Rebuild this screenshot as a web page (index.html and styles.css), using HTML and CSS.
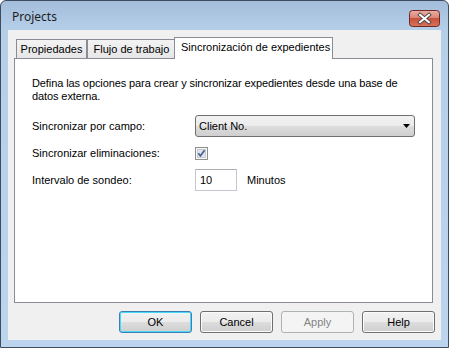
FILE: index.html
```html
<!DOCTYPE html>
<html lang="es">
<head>
<meta charset="utf-8">
<title>Projects</title>
<link rel="stylesheet" href="styles.css">
</head>
<body>
<div class="window">
  <div class="titlebar">
    <span class="title">Projects</span>
    <svg class="close" viewBox="0 0 31 17" width="31" height="17" aria-label="Cerrar">
      <defs>
        <linearGradient id="cg" x1="0" y1="0" x2="0" y2="1">
          <stop offset="0" stop-color="#eab0a6"/>
          <stop offset="0.45" stop-color="#db8576"/>
          <stop offset="0.5" stop-color="#c9503e"/>
          <stop offset="1" stop-color="#d9745a"/>
        </linearGradient>
      </defs>
      <rect x="0.5" y="0.5" width="30" height="16" rx="3" fill="url(#cg)" stroke="#6e2b25"/>
      <path d="M11 4.8 L20 12.2 M20 4.8 L11 12.2" stroke="#474747" stroke-width="3.8" stroke-linecap="square"/>
      <path d="M11 4.8 L20 12.2 M20 4.8 L11 12.2" stroke="#ffffff" stroke-width="2" stroke-linecap="square"/>
    </svg>
  </div>
  <div class="client">
    <div class="tabs">
      <div class="tab tab-props">Propiedades</div>
      <div class="tab tab-flow">Flujo de trabajo</div>
      <div class="tab tab-active">Sincronización de expedientes</div>
    </div>
    <div class="panel">
      <p class="desc">Defina las opciones para crear y sincronizar expedientes desde una base de<br>datos externa.</p>
      <div class="form">
        <div class="row">
          <span class="label">Sincronizar por campo:</span>
          <div class="combo">
            <span class="combo-text">Client No.</span>
            <svg class="arrow" width="7" height="4" viewBox="0 0 7 4"><path d="M0 0 H7 L3.5 4 Z" fill="#000"/></svg>
          </div>
        </div>
        <div class="row">
          <span class="label">Sincronizar eliminaciones:</span>
          <svg class="check" width="13" height="13" viewBox="0 0 13 13">
            <rect x="0.5" y="0.5" width="12" height="12" fill="#f6f6f6" stroke="#8f8f8f"/>
            <rect x="2.5" y="2.5" width="8" height="8" fill="#dfe3ea" stroke="#c8ccd4"/>
            <path d="M3.3 6.3 L5.4 8.8 L9.6 3.2" fill="none" stroke="#4a6392" stroke-width="1.7"/>
          </svg>
        </div>
        <div class="row">
          <span class="label">Intervalo de sondeo:</span>
          <div class="textbox">10</div>
          <span class="unit">Minutos</span>
        </div>
      </div>
    </div>
    <div class="buttons">
      <div class="btn btn-default">OK</div>
      <div class="btn">Cancel</div>
      <div class="btn btn-disabled">Apply</div>
      <div class="btn">Help</div>
    </div>
  </div>
</div>
</body>
</html>
```
FILE: styles.css
```css
* { box-sizing: border-box; }
html, body { margin: 0; padding: 0; }
body {
  width: 449px;
  height: 348px;
  overflow: hidden;
  background: #ffffff;
  font-family: "Liberation Sans", Arial, sans-serif;
  font-size: 11px;
  color: #000;
}
.window {
  width: 449px;
  height: 348px;
  border: 1px solid #3d4c5e;
  border-radius: 6px 6px 0 0;
  background: linear-gradient(#a3bddb 0px, #b6cfe9 30px, #bcd4ed 100%);
  display: flex;
  flex-direction: column;
}
.titlebar {
  height: 29px;
  display: flex;
  justify-content: space-between;
  align-items: flex-start;
  padding: 0 8px 0 11px;
}
.title {
  font-family: "Noto Sans", "Open Sans", sans-serif;
  font-size: 12px;
  line-height: 16px;
  margin-top: 8px;
  color: #1e1e1e;
}
.close { margin-top: 9px; display: block; }
.client {
  flex: 1;
  margin: 0 7px 7px 7px;
  background: #f0f0f0;
  padding: 7px 6px 7px 6px;
  display: flex;
  flex-direction: column;
}
.tabs {
  display: flex;
  align-items: flex-end;
  height: 21px;
  padding-left: 2px;
  position: relative;
  z-index: 1;
}
.tab {
  height: 19px;
  border: 1px solid #898c95;
  border-bottom: none;
  background: linear-gradient(#f3f3f3, #e6e6e6);
  line-height: 18px;
  text-align: center;
  white-space: nowrap;
}
.tab-props { width: 71px; }
.tab-flow { width: 89px; }
.tab-active {
  width: 159px;
  height: 22px;
  margin-left: -2px;
  margin-bottom: -1px;
  background: #ffffff;
  text-align: left;
  padding-left: 6px;
  padding-bottom: 3px;
}
.panel {
  flex: 1;
  margin-right: 2px;
  border: 1px solid #898c95;
  background: #ffffff;
  padding: 18px 17px 0 17px;
}
.desc {
  margin: 0;
  line-height: 13px;
  white-space: nowrap;
  letter-spacing: -0.1px;
}
.form {
  margin-top: 12px;
  display: flex;
  flex-direction: column;
  gap: 5px;
}
.row {
  display: flex;
  align-items: center;
  height: 22px;
}
.label { width: 163px; flex: none; }
.combo {
  width: 221px;
  height: 22px;
  border: 1px solid #707070;
  border-radius: 3px;
  background: linear-gradient(#f2f2f2 0%, #ebebeb 50%, #dddddd 50%, #cfcfcf 100%);
  display: flex;
  align-items: center;
  justify-content: space-between;
  padding: 0 4px 0 3px;
}
.arrow { display: block; }
.check { display: block; }
.textbox {
  width: 42px;
  height: 22px;
  border: 1px solid #c5c8d0;
  border-top-color: #abadb3;
  background: #fff;
  padding-left: 4px;
  line-height: 20px;
}
.unit { margin-left: 10px; }
.buttons {
  margin-top: 8px;
  display: flex;
  justify-content: flex-end;
  gap: 8px;
}
.btn {
  width: 73px;
  height: 22px;
  border: 1px solid #707070;
  border-radius: 3px;
  background: linear-gradient(#f2f2f2 0%, #ebebeb 50%, #dddddd 50%, #cfcfcf 100%);
  box-shadow: inset 0 0 0 1px #fbfbfb;
  text-align: center;
  line-height: 20px;
}
.btn-default {
  border-color: #3c7fb1;
  box-shadow: inset 0 0 0 1px #48d8fb;
}
.btn-disabled {
  border-color: #adb2b5;
  background: #f4f4f4;
  box-shadow: none;
  color: #838383;
}
```
